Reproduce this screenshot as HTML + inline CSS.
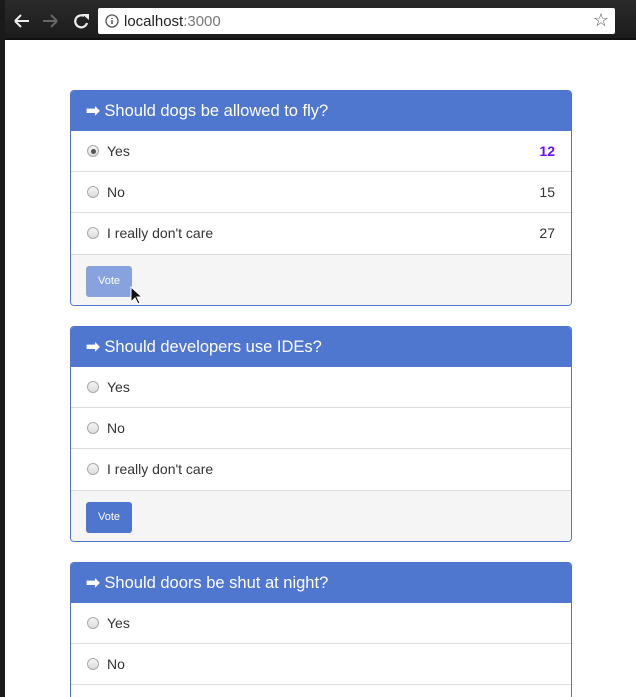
<!DOCTYPE html>
<html style="overflow:hidden;height:697px"><head><style>
*{box-sizing:border-box;margin:0;padding:0}
body{width:636px;height:697px;overflow:hidden;background:#fff;font-family:"Liberation Sans",sans-serif;position:relative}
.top{position:absolute;left:0;top:0;width:636px;height:40px;background:linear-gradient(#2a2a2a,#1c1c1c);border-bottom:2px solid #111}
.left{position:absolute;left:0;top:0;width:5px;height:697px;background:#1a1a1a}
.url{position:absolute;left:98px;top:8px;width:517px;height:26px;background:#fff;border-radius:2px;font-size:15px;color:#222;padding:5px 0 0 26px}
.url span{color:#777}
.card{position:absolute;left:70px;width:502px;border:1px solid #4f76cf;border-radius:4px;overflow:hidden;background:#fff}
.hd{height:40px;background:#5077cf;color:#fff;font-size:16.5px;padding:10px 15px}
.row{height:41px;border-bottom:1px solid #ddd;font-size:14px;color:#333;padding:12px 15px 0 36px;position:relative}
.row i{position:absolute;left:16px;top:14px;width:12px;height:12px;border-radius:50%;border:1px solid #aaa;background:linear-gradient(#f4f4f4,#ddd)}
.row i.on::after{content:"";position:absolute;left:2.5px;top:2.5px;width:5px;height:5px;border-radius:50%;background:#555}
.row b{position:absolute;right:16px;top:12px;font-weight:normal}
.ft{height:51px;background:#f5f5f5;border-top:1px solid #ddd;padding:11px 15px}
.btn{width:46px;height:31px;background:#4f76cf;color:#fff;font-size:11px;text-align:center;line-height:31px;border-radius:3px}
</style></head><body>
<div class="top">
<svg style="position:absolute;left:12px;top:11px" width="80" height="20" viewBox="0 0 80 20"><path d="M3 10h14M3 10l6-6M3 10l6 6" stroke="#eee" stroke-width="2" fill="none"/><path d="M31 10h14M45 10l-6-6M45 10l-6 6" stroke="#666" stroke-width="2" fill="none"/><path d="M72 5a6 6 0 1 0 3 7" stroke="#eee" stroke-width="2.2" fill="none"/><path d="M70 3h7v6z" fill="#eee"/></svg>
<div class="url"><svg style="position:absolute;left:7px;top:6px" width="14" height="14"><circle cx="7" cy="7" r="6" fill="none" stroke="#555" stroke-width="1.3"/><path d="M7 6v4M7 4v1" stroke="#555" stroke-width="1.5"/></svg>localhost<span>:3000</span><span style="position:absolute;right:6px;top:2px;font-size:18px;color:#555">☆</span></div>
</div>
<div class="left"></div>
<div class="card" style="top:90px">
<div class="hd"><b>➡</b> Should dogs be allowed to fly?</div>
<div class="row"><i class="on"></i>Yes<b style="color:#6a0dff;font-weight:bold">12</b></div>
<div class="row"><i></i>No<b>15</b></div>
<div class="row" style="border-bottom:none"><i></i>I really don't care<b>27</b></div>
<div class="ft"><div class="btn" style="background:#87a2dd">Vote</div></div>
</div>
<div class="card" style="top:326px">
<div class="hd"><b>➡</b> Should developers use IDEs?</div>
<div class="row"><i></i>Yes</div>
<div class="row"><i></i>No</div>
<div class="row" style="border-bottom:none"><i></i>I really don't care</div>
<div class="ft"><div class="btn">Vote</div></div>
</div>
<div class="card" style="top:562px;height:135px;border-bottom:none;border-radius:4px 4px 0 0">
<div class="hd"><b>➡</b> Should doors be shut at night?</div>
<div class="row"><i></i>Yes</div>
<div class="row"><i></i>No</div>
</div>
<svg style="position:absolute;left:130px;top:286px" width="14" height="20"><path d="M1 1v15l4-4 3 6 2-1-3-6h5z" fill="#111" stroke="#fff" stroke-width="1"/></svg>
</body></html>
